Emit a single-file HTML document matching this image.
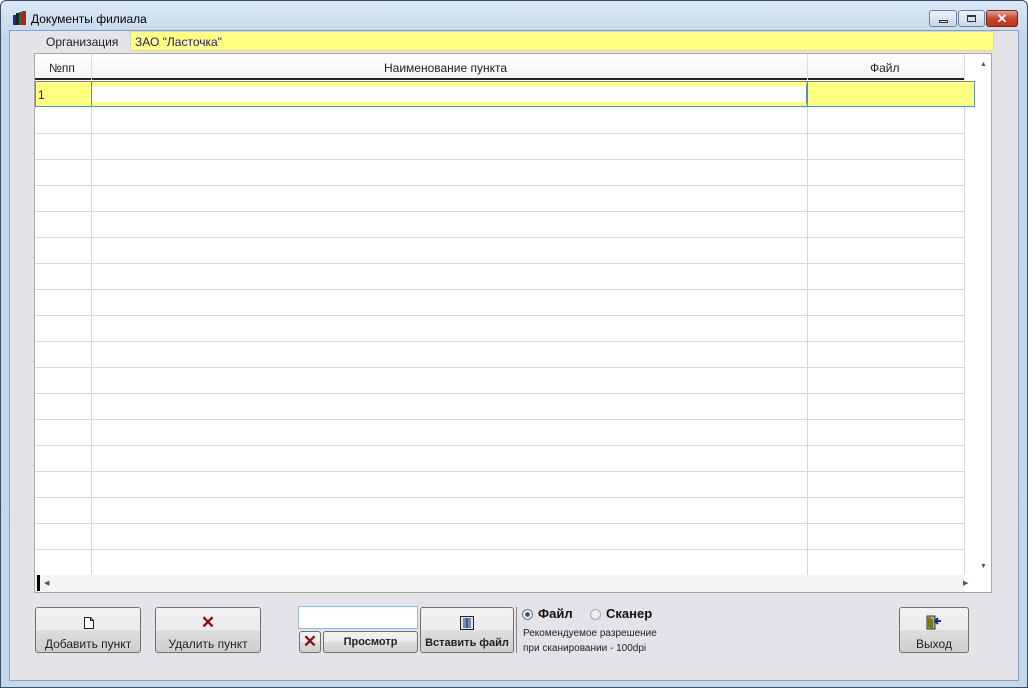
<!DOCTYPE html><html><head><meta charset="utf-8"><style>
*{box-sizing:border-box;margin:0;padding:0}
body{width:1028px;height:688px;overflow:hidden;font-family:"Liberation Sans",sans-serif;font-size:12px;background:#fff;position:relative}
.a{position:absolute}
#win{left:0;top:0;width:1028px;height:688px;border:1px solid #3a4d60;border-radius:6px 6px 0 0;background:linear-gradient(#dbe8f5,#c2d6ec 40px,#c4d8ee)}
#cl{left:9px;top:30px;width:1010px;height:651px;background:#e4e4e8;border:1px solid #8aa0b8}
.btn{position:absolute;border:1px solid #707070;border-radius:3px;background:linear-gradient(#f2f2f2 0,#ebebeb 50%,#dddddd 51%,#cfcfcf);text-align:center;font-size:12px;color:#222}
.hl{position:absolute;left:35px;width:929px;height:1px;background:#d8d8d8}
.vl{position:absolute;top:81px;height:494px;width:1px;background:#d8d8d8}
</style></head><body>
<div id="win" class="a"></div>
<div class="a" style="left:12px;top:10px;width:15px;height:15px">
<svg width="15" height="15"><rect x="1" y="5" width="3" height="10" fill="#1a2c8c"/><rect x="4" y="3" width="3" height="12" fill="#222"/><rect x="7" y="2" width="3" height="13" fill="#2a6c2a"/><rect x="10" y="1" width="4" height="14" fill="#b02020"/></svg></div>
<div class="a" style="left:31px;top:12px;font-size:12px;color:#000">Документы филиала</div>
<div class="a" style="left:929px;top:10px;width:28px;height:17px;border:1px solid #6c7f98;border-radius:3px;background:linear-gradient(#eef3f9,#c8d6e6)"><div class="a" style="left:9px;top:9px;width:9px;height:3px;border:1px solid #333"></div></div>
<div class="a" style="left:958px;top:10px;width:27px;height:17px;border:1px solid #6c7f98;border-radius:3px;background:linear-gradient(#eef3f9,#c8d6e6)"><div class="a" style="left:8px;top:4px;width:9px;height:7px;border:1px solid #333;border-top-width:2px"></div></div>
<div class="a" style="left:986px;top:10px;width:32px;height:17px;border:1px solid #6b2a20;border-radius:3px;background:linear-gradient(#e8a090,#c8452f 50%,#b83520);color:#fff;font-weight:bold;text-align:center;font-size:13px;line-height:15px">✕</div>
<div id="cl" class="a"></div>
<div class="a" style="left:46px;top:35px;font-size:12px;color:#222">Организация</div>
<div class="a" style="left:130px;top:31px;width:864px;height:20px;background:#ffff80;border:1px solid #d8d8b0;color:#1a1a8a;padding:3px 0 0 4px;font-size:12px">ЗАО "Ласточка"</div>
<div class="a" style="left:34px;top:53px;width:958px;height:540px;background:#fff;border:1px solid #a8a8a8"></div>
<div class="a" style="left:35px;top:54px;width:929px;height:26px;background:linear-gradient(#fff,#f4f4f4);border-bottom:2px solid #222"></div>
<div class="a" style="left:49px;top:61px;color:#222">№пп</div>
<div class="a" style="left:384px;top:61px;color:#222">Наименование пункта</div>
<div class="a" style="left:870px;top:61px;color:#222">Файл</div>
<div class="a" style="left:91px;top:54px;width:1px;height:26px;background:#ddd"></div>
<div class="a" style="left:807px;top:54px;width:1px;height:26px;background:#ddd"></div>
<div class="a" style="left:964px;top:54px;width:1px;height:26px;background:#ddd"></div>
<div class="vl" style="left:91px"></div><div class="vl" style="left:807px"></div><div class="vl" style="left:964px"></div>
<div class="hl" style="top:133px"></div><div class="hl" style="top:159px"></div><div class="hl" style="top:185px"></div><div class="hl" style="top:211px"></div><div class="hl" style="top:237px"></div><div class="hl" style="top:263px"></div><div class="hl" style="top:289px"></div><div class="hl" style="top:315px"></div><div class="hl" style="top:341px"></div><div class="hl" style="top:367px"></div><div class="hl" style="top:393px"></div><div class="hl" style="top:419px"></div><div class="hl" style="top:445px"></div><div class="hl" style="top:471px"></div><div class="hl" style="top:497px"></div><div class="hl" style="top:523px"></div><div class="hl" style="top:549px"></div>
<div class="a" style="left:35px;top:81px;width:940px;height:26px;background:#ffff80;border:1px solid #5a8ad0"></div>
<div class="a" style="left:91px;top:82px;width:716px;height:24px;border:1px solid #5a8ad0;background:#fff;border-top:4px solid #ffff80;border-bottom:4px solid #ffff80"></div>
<div class="a" style="left:91px;top:81px;width:717px;height:26px;border:1px solid #5a8ad0"></div>
<div class="a" style="left:38px;top:88px;color:#222">1</div>
<div class="a" style="left:980px;top:61px;font-size:7px;color:#555">▲</div>
<div class="a" style="left:980px;top:563px;font-size:7px;color:#555">▼</div>
<div class="a" style="left:35px;top:575px;width:929px;height:17px;background:#f4f4f4"></div>
<div class="a" style="left:37px;top:575px;width:3px;height:16px;background:#000"></div>
<div class="a" style="left:44px;top:579px;font-size:7px;color:#555">◀</div>
<div class="a" style="left:963px;top:579px;font-size:7px;color:#555">▶</div>
<div class="btn" style="left:35px;top:607px;width:106px;height:46px"><svg class="a" style="left:47px;top:8px" width="12" height="14"><path d="M1.5 1.5h6l3 3v8h-9z M7.5 1.5v3h3" fill="#fff" stroke="#222"/></svg><div class="a" style="left:0;right:0;top:29px">Добавить пункт</div></div>
<div class="btn" style="left:155px;top:607px;width:106px;height:46px"><div class="a" style="left:0;right:0;top:5px;color:#8a1010;font-size:17px;font-weight:bold">✕</div><div class="a" style="left:0;right:0;top:29px">Удалить пункт</div></div>
<div class="a" style="left:298px;top:606px;width:120px;height:23px;background:#fff;border:1px solid #9ab8d8"></div>
<div class="btn" style="left:299px;top:631px;width:22px;height:22px;color:#8a1010;font-size:17px;font-weight:bold;line-height:20px">✕</div>
<div class="btn" style="left:323px;top:631px;width:95px;height:22px;font-weight:bold;font-size:11px;line-height:20px">Просмотр</div>
<div class="btn" style="left:420px;top:607px;width:94px;height:46px"><svg class="a" style="left:39px;top:8px" width="14" height="14"><rect x="0.5" y="0.5" width="13" height="13" fill="#cdeeff" stroke="#222"/><path d="M3 3h8M3 5h8M3 7h8M3 9h8M3 11h8M7 2v10" stroke="#226" stroke-width="1"/></svg><div class="a" style="left:0;right:0;top:29px;font-weight:bold;font-size:11px">Вставить файл</div></div>
<div class="a" style="left:516px;top:607px;width:1px;height:46px;background:#888"></div>
<div class="a" style="left:522px;top:609px;width:11px;height:11px;border-radius:50%;border:1px solid #777;background:radial-gradient(#1a4f8a 30%,#e8eef4 40%)"></div>
<div class="a" style="left:538px;top:606px;font-weight:bold;font-size:13px;color:#111">Файл</div>
<div class="a" style="left:590px;top:609px;width:11px;height:11px;border-radius:50%;border:1px solid #aaa;background:#eee"></div>
<div class="a" style="left:606px;top:606px;font-weight:bold;font-size:13px;color:#111">Сканер</div>
<div class="a" style="left:523px;top:626px;font-size:10px;color:#222;line-height:15px">Рекомендуемое разрешение<br>при сканировании - 100dpi</div>
<div class="btn" style="left:899px;top:607px;width:70px;height:46px"><svg class="a" style="left:26px;top:6px" width="16" height="16"><rect x="1" y="2" width="8" height="13" fill="#b0b0a0" stroke="#333"/><path d="M2 3l5 2v10l-5-2z" fill="#7a7a10"/><path d="M9 7h6M12 4l-3 3 3 3" stroke="#1a2a9a" stroke-width="2" fill="none"/></svg><div class="a" style="left:0;right:0;top:29px">Выход</div></div>
</body></html>
